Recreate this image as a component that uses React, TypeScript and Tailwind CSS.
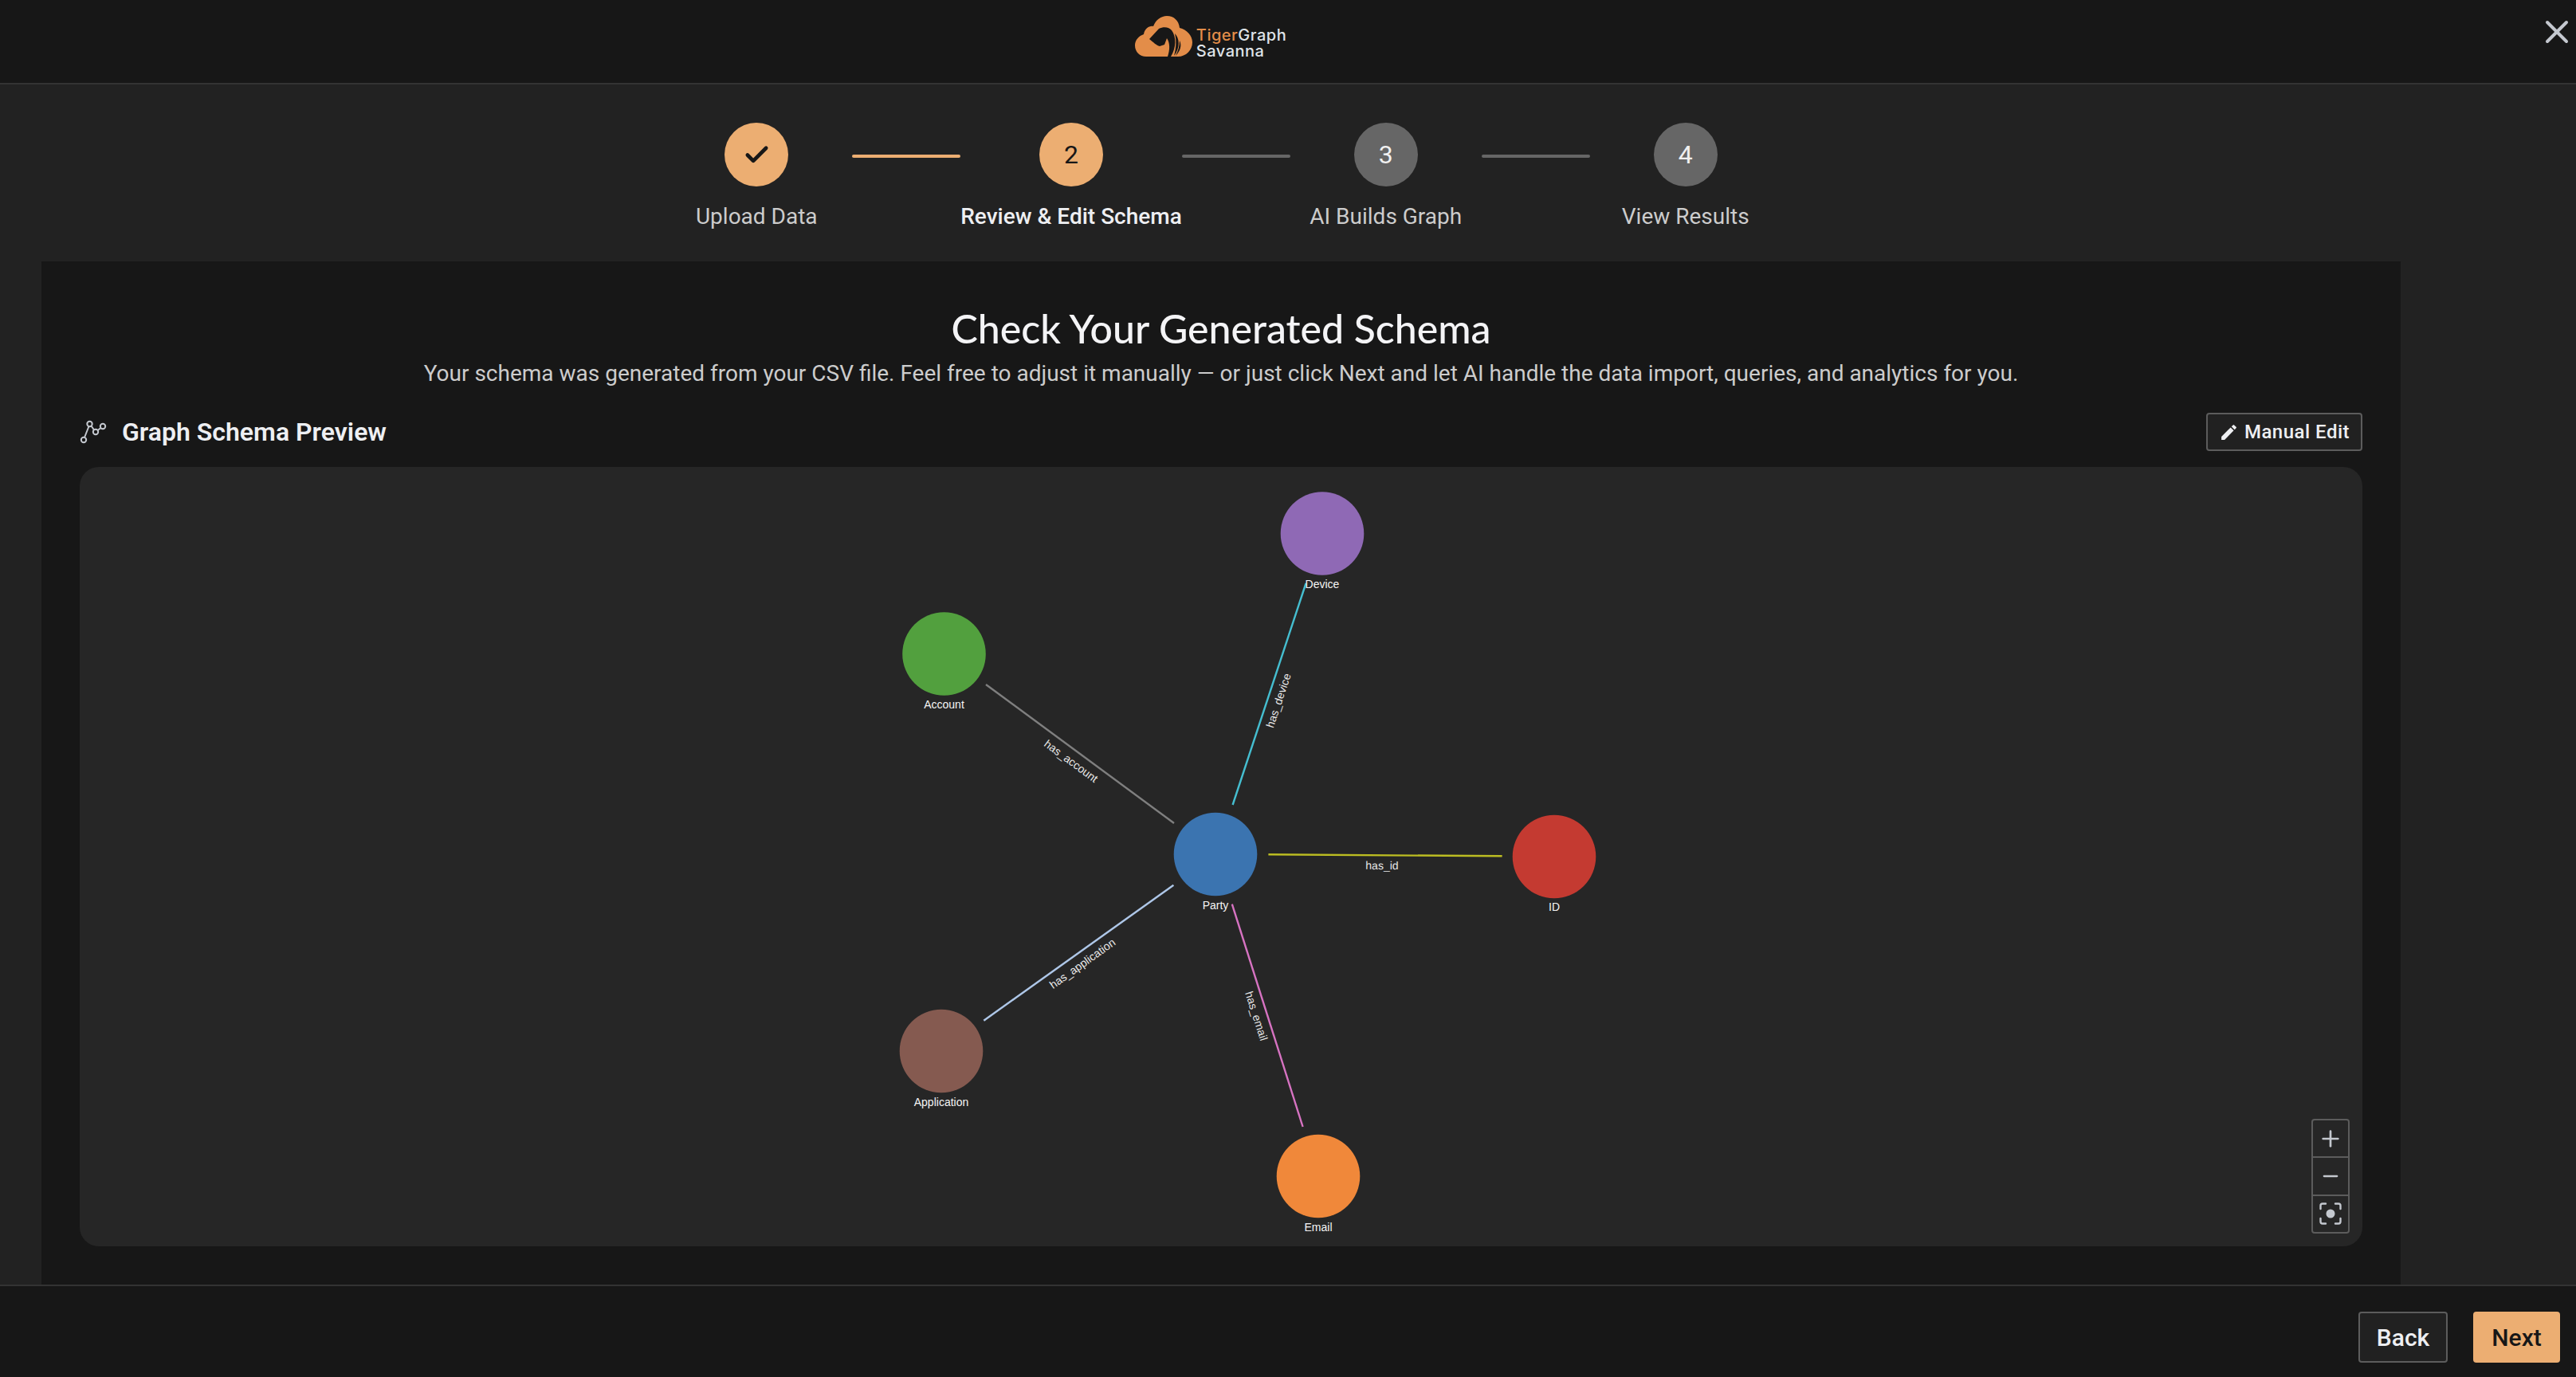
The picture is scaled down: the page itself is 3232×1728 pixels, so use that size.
import { Check, Minus, Plus, X } from 'lucide-react';
import { MdEdit } from 'react-icons/md';

const steps = [
  { label: 'Upload Data', done: true },
  { label: 'Review & Edit Schema', active: true, n: 2 },
  { label: 'AI Builds Graph', n: 3 },
  { label: 'View Results', n: 4 },
];

// positions are relative to the graph panel
const nodes = [
  { name: 'Party', x: 1425, y: 486, color: '#3b74b0', labelY: 550 },
  { name: 'Device', x: 1559, y: 83.5, color: '#8f69b5', labelY: 147 },
  { name: 'Account', x: 1084.5, y: 234.5, color: '#52a03e', labelY: 298 },
  { name: 'ID', x: 1850, y: 489, color: '#c43a31', labelY: 552 },
  { name: 'Application', x: 1081, y: 733, color: '#855a50', labelY: 797 },
  { name: 'Email', x: 1554, y: 890, color: '#f0883a', labelY: 954 },
];

const edges = [
  { name: 'has_account', x1: 1137, y1: 273, x2: 1373, y2: 447, color: '#7f7f7f', lx: 1244, ly: 369, rot: 36.4 },
  { name: 'has_device', x1: 1538.5, y1: 146, x2: 1446.6, y2: 424, color: '#45bed0', lx: 1504, ly: 293, rot: -71.7 },
  { name: 'has_application', x1: 1372.4, y1: 524.7, x2: 1134.3, y2: 694.7, color: '#aec7e8', lx: 1258, ly: 623, rot: -35.5 },
  { name: 'has_email', x1: 1445.8, y1: 548.7, x2: 1534.6, y2: 828, color: '#d773c2', lx: 1476.5, ly: 689, rot: 72.3 },
  { name: 'has_id', x1: 1491.4, y1: 486.3, x2: 1784.6, y2: 488.3, color: '#bcbd22', lx: 1634, ly: 500, rot: 0.4 },
];

function Logo() {
  return (
    <div className="flex items-start gap-[5px]">
      <svg viewBox="0 0 72 52" className="w-[72px] h-[52px]">
        <path
          d="M14 51C6 51 0 45 0 37C0 30 5 25 11 23C12 16 18 12 23 13C26 5 33 0 40 0C49 0 55 6 56 15C65 17 72 25 72 33C72 43 64 51 54 51Z"
          fill="#e38d49"
        />
        <path
          d="M18 29L30 16C36 13 43 14 46 18C52 26 52 40 45 51L41 51C44 42 44 34 40 28L37 36L31 38C27 37 23 33 18 29Z"
          fill="#171717"
        />
        <path d="M50 22C56 28 57 40 49 50C52 40 52 30 50 22Z" fill="#171717" />
        <path d="M56 31C59 37 57 44 51 50C54 44 56 38 56 31Z" fill="#171717" />
      </svg>
      <div className="flex flex-col mt-[14px] text-[20px] leading-[20px] tracking-[0.5px] font-['Inter',sans-serif] font-medium">
        <span>
          <span className="text-[#e38d49]">Tiger</span>
          <span className="text-[#dfe3e8]">Graph</span>
        </span>
        <span className="text-[#dfe3e8]">Savanna</span>
      </div>
    </div>
  );
}

function Stepper() {
  return (
    <div className="flex justify-center pt-[48px] h-[222px]">
      {steps.map((step, i) => (
        <div key={step.label} className="flex">
          {i > 0 && (
            <div className={`w-[136px] h-[4px] mt-[40px] rounded-full ${step.active || step.done ? 'bg-[#ecae72]' : 'bg-[#666666]'}`} />
          )}
          <div className="flex flex-col items-center min-w-[240px]">
            <div
              className={`w-[80px] h-[80px] rounded-full flex items-center justify-center text-[32px] ${
                step.done || step.active ? 'bg-[#ecae72] text-[#171717]' : 'bg-[#666666] text-[#f0f0f0]'
              }`}
            >
              {step.done ? <Check size={35} strokeWidth={3.2} /> : step.n}
            </div>
            <span className={`mt-[18px] text-[28px] leading-[40px] whitespace-nowrap ${step.active ? 'text-[#eeeff2] font-medium' : 'text-[#cccccc]'}`}>
              {step.label}
            </span>
          </div>
        </div>
      ))}
    </div>
  );
}

function SchemaIcon() {
  return (
    <svg viewBox="0 0 34 30" className="w-[34px] h-[30px]" fill="none" stroke="#c4c8cf" strokeWidth="2">
      <circle cx="5" cy="25" r="3.2" />
      <circle cx="12.5" cy="5" r="3.2" />
      <circle cx="20" cy="15" r="3.2" />
      <circle cx="29" cy="8" r="3.2" />
      <path d="M6 22L11.5 8M14.5 7.5L18 12.5M22.5 13L26.5 10" />
    </svg>
  );
}

function FitIcon() {
  return (
    <svg viewBox="0 0 28 28" className="w-[28px] h-[28px]" fill="none" stroke="#c4c8cf" strokeWidth="2.4" strokeLinecap="round">
      <path d="M1.5 8V4C1.5 2.6 2.6 1.5 4 1.5H8M20 1.5H24C25.4 1.5 26.5 2.6 26.5 4V8M26.5 20V24C26.5 25.4 25.4 26.5 24 26.5H20M8 26.5H4C2.6 26.5 1.5 25.4 1.5 24V20" />
      <circle cx="14" cy="14" r="5.5" fill="#c4c8cf" stroke="none" />
    </svg>
  );
}

function SchemaGraph() {
  return (
    <svg viewBox="0 0 2864 978" className="absolute inset-0 w-full h-full font-['Liberation_Sans',Arial,sans-serif]">
      {edges.map((e) => (
        <g key={e.name}>
          <line x1={e.x1} y1={e.y1} x2={e.x2} y2={e.y2} stroke={e.color} strokeWidth="2.4" />
          <text
            x={e.lx}
            y={e.ly}
            transform={`rotate(${e.rot} ${e.lx} ${e.ly})`}
            textAnchor="middle"
            dominantBaseline="central"
            fontSize="14"
            fill="#e8e8e8"
          >
            {e.name}
          </text>
        </g>
      ))}
      {nodes.map((n) => (
        <g key={n.name}>
          <circle cx={n.x} cy={n.y} r="52.3" fill={n.color} />
          <text x={n.x} y={n.labelY} textAnchor="middle" dominantBaseline="central" fontSize="14" fill="#f5f5f5">
            {n.name}
          </text>
        </g>
      ))}
    </svg>
  );
}

export default function App() {
  return (
    <div className="w-[3232px] h-[1728px] flex flex-col overflow-hidden bg-[#222222] font-['Roboto',sans-serif]">
      <header className="relative h-[106px] shrink-0 flex justify-center bg-[#171717] border-b-2 border-[#333333]">
        <div className="mr-[194px] pt-[20px]">
          <Logo />
        </div>
        <button className="absolute top-[16px] right-0 text-[#c4c8cf]">
          <X size={48} strokeWidth={2} />
        </button>
      </header>

      <main className="flex-1 min-h-0 w-[2960px] ml-[52px] flex flex-col">
        <Stepper />
        <section className="flex-1 min-h-0 bg-[#171717] px-[48px] flex flex-col">
          <h1 className="mt-[48px] text-center text-[50px] leading-[72px] text-[#f4f4f6] font-['Lato',sans-serif] font-medium">
            Check Your Generated Schema
          </h1>
          <p className="mt-[3px] text-center text-[28px] leading-[36px] text-[#cccccc]">
            Your schema was generated from your CSV file. Feel free to adjust it manually — or just click Next and let AI handle the data import, queries, and analytics for you.
          </p>
          <div className="mt-[31px] h-[48px] flex items-center justify-between">
            <div className="flex items-center gap-[19px] text-[32px] font-semibold text-[#eeeff2]">
              <SchemaIcon />
              <span>Graph Schema Preview</span>
            </div>
            <button className="w-[196px] h-[48px] flex items-center justify-center gap-[7px] border-2 border-[#5c5c5c] rounded-[4px] bg-[#212121] text-[24px] font-medium tracking-[0.5px] text-[#eeeff2]">
              <MdEdit size={25} />
              Manual Edit
            </button>
          </div>
          <div className="relative mt-[20px] h-[978px] shrink-0 rounded-3xl bg-[#262626]">
            <SchemaGraph />
            <div className="absolute right-[16px] bottom-[16px] w-[48px] h-[144px] flex flex-col border-2 border-[#5c5c5c] rounded-[4px] text-[#c4c8cf] divide-y-2 divide-[#5c5c5c]">
              <button className="flex-1 flex items-center justify-center"><Plus size={32} /></button>
              <button className="flex-1 flex items-center justify-center"><Minus size={28} /></button>
              <button className="flex-1 flex items-center justify-center"><FitIcon /></button>
            </div>
          </div>
        </section>
      </main>

      <footer className="h-[116px] shrink-0 flex items-start justify-end gap-[32px] pt-[32px] pr-[20px] bg-[#171717] border-t-2 border-[#333333]">
        <button className="w-[112px] h-[64px] border-2 border-[#5c5c5c] rounded-[4px] bg-[#212121] text-[30px] font-medium text-[#eeeff2]">
          Back
        </button>
        <button className="w-[109px] h-[64px] rounded-[4px] bg-[#ecae72] text-[30px] font-medium text-[#171717]">
          Next
        </button>
      </footer>
    </div>
  );
}
